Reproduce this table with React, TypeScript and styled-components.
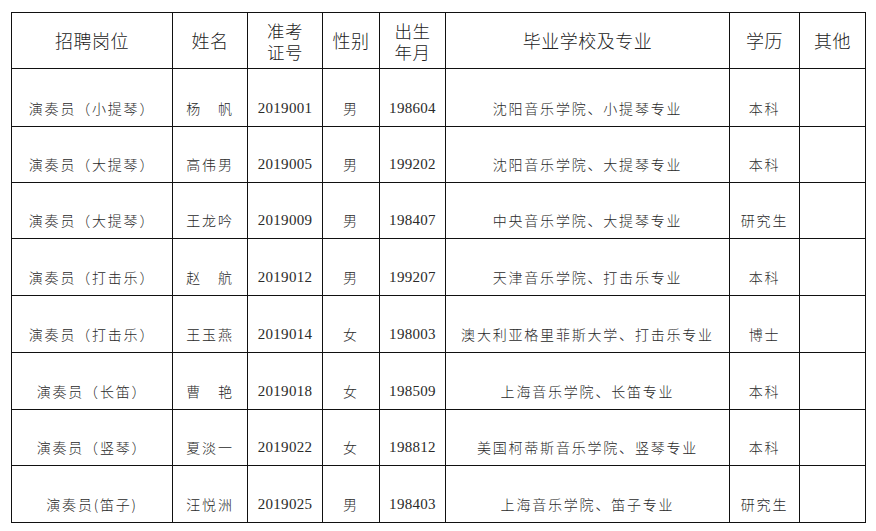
import { createGlobalStyle } from 'styled-components';
import styled from 'styled-components';

const GlobalStyle = createGlobalStyle`
  html, body {
    margin: 0;
    padding: 0;
    background: #ffffff;
  }
  body {
    font-family: "Noto Sans CJK SC", sans-serif;
    color: #222222;
  }
`;

const widths = [161, 75, 75, 57, 66, 284, 70, 66];

const rows = [
  { h: 58, post: '演奏员（小提琴）', name: '杨　帆', no: '2019001', sex: '男', born: '198604', school: '沈阳音乐学院、小提琴专业', edu: '本科' },
  { h: 56, post: '演奏员（大提琴）', name: '高伟男', no: '2019005', sex: '男', born: '199202', school: '沈阳音乐学院、大提琴专业', edu: '本科' },
  { h: 56, post: '演奏员（大提琴）', name: '王龙吟', no: '2019009', sex: '男', born: '198407', school: '中央音乐学院、大提琴专业', edu: '研究生' },
  { h: 57, post: '演奏员（打击乐）', name: '赵　航', no: '2019012', sex: '男', born: '199207', school: '天津音乐学院、打击乐专业', edu: '本科' },
  { h: 57, post: '演奏员（打击乐）', name: '王玉燕', no: '2019014', sex: '女', born: '198003', school: '澳大利亚格里菲斯大学、打击乐专业', edu: '博士' },
  { h: 57, post: '演奏员（长笛）', name: '曹　艳', no: '2019018', sex: '女', born: '198509', school: '上海音乐学院、长笛专业', edu: '本科' },
  { h: 56, post: '演奏员（竖琴）', name: '夏淡一', no: '2019022', sex: '女', born: '198812', school: '美国柯蒂斯音乐学院、竖琴专业', edu: '本科' },
  { h: 57, post: '演奏员(笛子)', name: '汪悦洲', no: '2019025', sex: '男', born: '198403', school: '上海音乐学院、笛子专业', edu: '研究生' },
];

export default function App() {
  return (
    <Page>
      <GlobalStyle />
      <Table>
        <colgroup>
          {widths.map((w, i) => (
            <col key={i} style={{ width: w }} />
          ))}
        </colgroup>
        <thead>
          <HeadRow>
            <Th>招聘岗位</Th>
            <Th>姓名</Th>
            <Th>
              <HeadLine>准考</HeadLine>
              <HeadLine>证号</HeadLine>
            </Th>
            <Th>性别</Th>
            <Th>
              <HeadLine>出生</HeadLine>
              <HeadLine>年月</HeadLine>
            </Th>
            <Th>毕业学校及专业</Th>
            <Th>学历</Th>
            <Th>其他</Th>
          </HeadRow>
        </thead>
        <tbody>
          {rows.map((r, i) => (
            <BodyRow key={i} style={{ height: r.h }}>
              <Td>{r.post}</Td>
              <Td>{r.name}</Td>
              <Td $num>{r.no}</Td>
              <Td>{r.sex}</Td>
              <Td $num>{r.born}</Td>
              <Td>{r.school}</Td>
              <Td>{r.edu}</Td>
              <Td />
            </BodyRow>
          ))}
        </tbody>
      </Table>
    </Page>
  );
}

const Page = styled.div`
  width: 876px;
  height: 531px;
  padding: 12px 0 0 11px;
  box-sizing: border-box;
  background: #ffffff;
`;

const Table = styled.table`
  border-collapse: collapse;
  table-layout: fixed;
  width: 854px;
`;

const HeadRow = styled.tr`
  height: 56px;
`;

const BodyRow = styled.tr``;

const Th = styled.th`
  border: 1px solid #111111;
  padding: 0;
  font-size: 18px;
  font-weight: 300;
  line-height: 21px;
  letter-spacing: 0.5px;
  text-align: center;
  vertical-align: middle;
  color: #222222;
`;

const HeadLine = styled.div`
  height: 21px;
  line-height: 21px;
  font-size: 17.5px;
`;

const Td = styled.td<{ $num?: boolean }>`
  border: 1px solid #111111;
  padding: 0 0 11px;
  font-family: ${(p) => (p.$num ? '"Liberation Serif", serif' : '"Noto Sans CJK SC", sans-serif')};
  font-size: ${(p) => (p.$num ? '15px' : '14px')};
  font-weight: 300;
  letter-spacing: ${(p) => (p.$num ? '0.3px' : '1.8px')};
  line-height: 14px;
  text-align: center;
  vertical-align: bottom;
  white-space: nowrap;
  color: #2a2a2a;
`;
